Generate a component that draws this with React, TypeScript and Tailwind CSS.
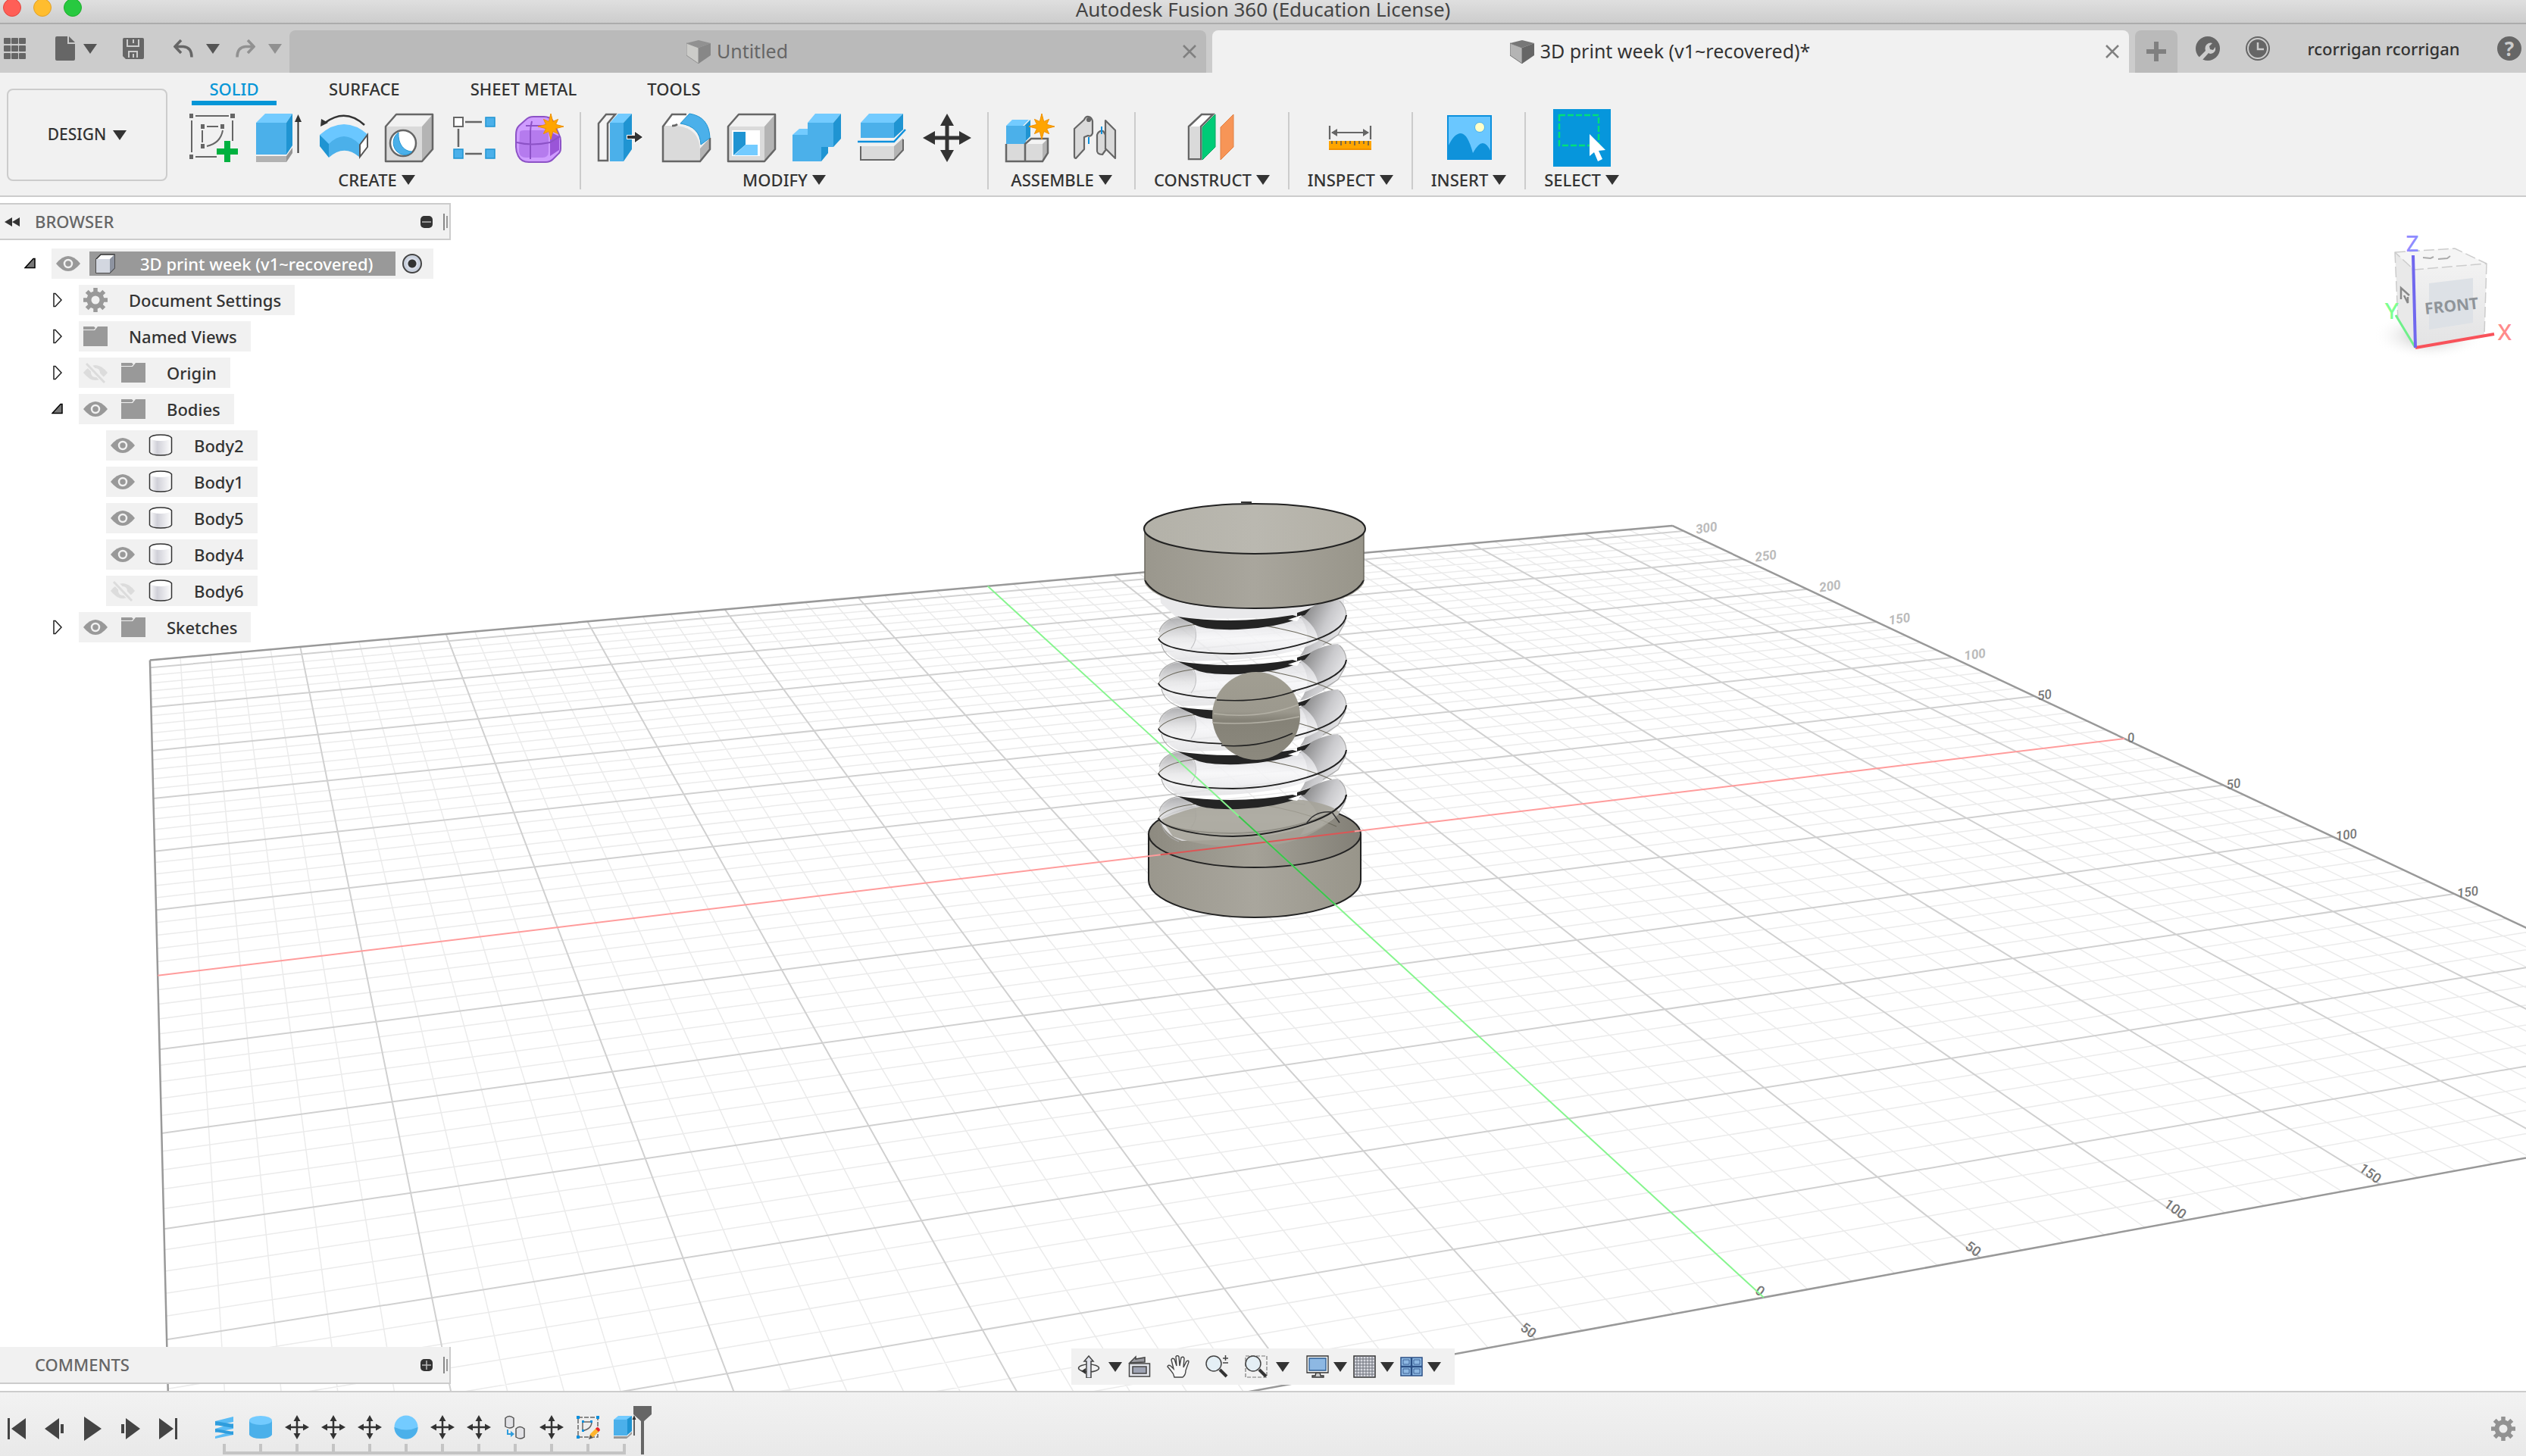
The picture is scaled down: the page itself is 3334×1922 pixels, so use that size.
import { ReactNode } from 'react';
import clsx from 'clsx';

/* ---------- small shared shapes ---------- */

const Caret = ({ className = 'text-[#333]' }: { className?: string }) => (
  <svg viewBox="0 0 18 13" className={clsx('w-[18px] h-[13px] shrink-0', className)} fill="currentColor">
    <path d="M0 0h18L9 13z" />
  </svg>
);

const starPoints = (cx: number, cy: number, outer: number, inner: number) =>
  Array.from({ length: 16 }, (_, i) => {
    const long = i % 4 === 0 ? outer : outer * 0.8;
    const r = i % 2 === 0 ? long : inner;
    const a = (Math.PI * i) / 8;
    return `${(cx + r * Math.sin(a)).toFixed(1)},${(cy - r * Math.cos(a)).toFixed(1)}`;
  }).join(' ');

const Star = ({ x, y }: { x: number; y: number }) => (
  <polygon points={starPoints(x, y, 17, 7)} fill="#ffa500" stroke="#f09000" strokeWidth="1" />
);

const Gear = ({ className }: { className: string }) => (
  <svg viewBox="0 0 32 32" className={className} fill="none" stroke="currentColor">
    <circle cx="16" cy="16" r="8.5" strokeWidth="6" />
    {[0, 45, 90, 135, 180, 225, 270, 315].map((a) => (
      <path key={a} d="M16 6V0" strokeWidth="5.5" transform={`rotate(${a} 16 16)`} />
    ))}
  </svg>
);

const MovePath = () => (
  <path
    fill="#333"
    d="M32 0l9 16h-6.5v13.5H48V23l16 9-16 9v-6.500H34.500V48H41l-9 16-9-16h6.500V34.500H16V41L0 32l16-9v6.500h13.500V16H23z"
  />
);

const GrayBox = () => (
  <g stroke="#666" strokeWidth="2.500" strokeLinejoin="round">
    <path d="M1 17L15 1h48L49 17z" fill="#f2f2f2" stroke="none" />
    <path d="M49 17L63 1v46L49 63z" fill="#b4b4b4" stroke="none" />
    <path d="M1 17h48v46H1z" fill="#dadada" stroke="none" />
    <path d="M1 17L15 1h48v46L49 63H1z" fill="none" />
  </g>
);

/* ---------- toolbar icons, all on a 64 grid ---------- */

const icons: Record<string, ReactNode> = {
  sketch: (
    <>
      <g fill="#666">
        <path d="M0 0h5v6H0zM54 0h6v6h-6zM0 54h5v6H0zM15 14h5v6h-5zM41 14h5v6h-5zM15 40h5v6h-5z" />
      </g>
      <path d="M8 3h44M3 9v42M57 9v27M8 57h28M23 17h15M17 22v16M44 22q-3 17-21 21" fill="none" stroke="#666" strokeWidth="2" />
      <path d="M46 36h8v10h10v8H54v10h-8V54H36v-8h10z" fill="#00b140" />
    </>
  ),
  extrude: (
    <>
      <path d="M2 12L14 0h36l-8 12z" fill="#73cbff" />
      <path d="M42 12l8-12v42l-8 12z" fill="#1f94d2" />
      <path d="M2 12h40v42H2z" fill="#4bb0ea" />
      <path d="M2 56h40v8H2z" fill="#b2b2b2" />
      <path d="M42 56l8-11v7l-8 12z" fill="#949494" />
      <path d="M57.500 8v44" stroke="#333" strokeWidth="2" />
      <path d="M57.500 1l4.500 10h-9z" fill="#333" />
    </>
  ),
  revolve: (
    <>
      <path d="M59 15Q34-8 7 12" fill="none" stroke="#333" strokeWidth="2.500" />
      <path d="M1 17L2 7l9 5z" fill="#333" />
      <path d="M0 28Q32 0 64 28L52 42Q32 22 12 42z" fill="#6ac7ff" />
      <path d="M0 28l12 12v18L0 43z" fill="#1f94d2" />
      <path d="M12 40q20-20 40 0v17q-20-17-40 1z" fill="#4bb0ea" />
      <path d="M53 41l10-13v16L53 57z" fill="#fff" stroke="#555" strokeWidth="2" />
    </>
  ),
  hole: (
    <>
      <GrayBox />
      <circle cx="24" cy="39" r="17" fill="#fff" stroke="#666" strokeWidth="2.500" />
      <path d="M18 25c-8 5-9 17-3 24s16 7 21 1c-10 0-19-9-18-25z" fill="#4bb0ea" stroke="#1f94d2" />
    </>
  ),
  pattern: (
    <>
      <path d="M20 11h22M11 20v24M20 53h22" stroke="#666" strokeWidth="2.500" />
      <path d="M5 5h12v12H5z" fill="#fff" stroke="#666" strokeWidth="2" />
      <path d="M47 5h12v12H47zM5 47h12v12H5zM47 47h12v12H47z" fill="#4bb0ea" stroke="#1f94d2" strokeWidth="1.500" />
    </>
  ),
  form: (
    <>
      <path d="M14 8q4-4 10-4h14q8 0 12 6l8 18q2 3 2 8v10q0 5-4 8l-6 6q-4 4-10 4H18q-10 0-14-8Q1 50 1 44V28q0-8 4-12z" fill="#cf9cff" stroke="#8c52c6" strokeWidth="2" />
      <path d="M46 24l12 6v18L46 56z" fill="#9a55d8" />
      <path d="M6 24q1-2 6-2h26q6 0 6 6v22q0 8-8 8H14q-8 0-9-8z" fill="#b57bee" />
      <path d="M22 10q-2 8-2 14v36M2 38q20 5 44 0l13-8M14 16h24" fill="none" stroke="#8c52c6" strokeWidth="2" />
      <Star x={47} y={17} />
    </>
  ),
  press: (
    <>
      <path d="M2 13L12 1h12L14 13v49H2z" fill="#f4f4f4" stroke="#666" strokeWidth="2.500" />
      <path d="M17 12L28 0h18L35 12z" fill="#73cbff" />
      <path d="M35 12L46 0v47L35 63z" fill="#1f94d2" />
      <path d="M17 12h18v51H17z" fill="#4bb0ea" />
      <path d="M40 29h10v-5l10 7-10 7v-5H40z" fill="#333" stroke="#fff" strokeWidth="2" paintOrder="stroke" />
    </>
  ),
  fillet: (
    <>
      <path d="M1 16L13 1h20L20 16z" fill="#fff" />
      <path d="M1 16h18q30 3 31 32v15H1z" fill="#dadada" />
      <path d="M50 46l13-14v14L50 63z" fill="#b4b4b4" />
      <path d="M20 14q-2 2-7 2M32 1H13L1 17v46h49l13-16V32" fill="none" stroke="#666" strokeWidth="2.500" />
      <path d="M24 13L36 0q26 4 27 32L51 41Q50 17 24 13z" fill="#4bb0ea" stroke="#1f94d2" />
    </>
  ),
  shell: (
    <>
      <GrayBox />
      <path d="M6 22h37v34H6z" fill="#fff" />
      <path d="M8 24h16v17L8 55z" fill="#1f94d2" />
      <path d="M9 55l15-14h16v14z" fill="#73cbff" />
    </>
  ),
  combine: (
    <>
      <path d="M0 28l9-8h11v8zM20 12L30 0h34L54 12z" fill="#73cbff" />
      <path d="M54 12L64 0v33L54 44zM38 44h9v8l-9 11z" fill="#1f94d2" />
      <path d="M0 28h20V12h34v32H38v19H0z" fill="#4bb0ea" />
    </>
  ),
  split: (
    <>
      <path d="M4 12L15 0h45L48 12z" fill="#73cbff" />
      <path d="M48 12L60 0v21L48 32z" fill="#1f94d2" />
      <path d="M4 12h44v20H4z" fill="#4bb0ea" />
      <path d="M0 37h48l15-16" fill="none" stroke="#0c90dd" strokeWidth="2.500" />
      <path d="M4 43h44v18H4z" fill="#dadada" />
      <path d="M48 43l12-11v16L48 61z" fill="#b4b4b4" />
      <path d="M4 43v18h44l12-13V34" fill="none" stroke="#666" strokeWidth="2" />
    </>
  ),
  move: <MovePath />,
  component: (
    <>
      <path d="M2 16l8-8h22l-8 8z" fill="#73cbff" />
      <path d="M26 16l8-8v22l-8 8z" fill="#1f94d2" />
      <path d="M2 16h26v24H2z" fill="#4bb0ea" />
      <path d="M27 40l8-7h22l-7 7z" fill="#f4f4f4" />
      <path d="M2 40h48v23H2z" fill="#dadada" />
      <path d="M50 40l7-7v19l-7 11z" fill="#b4b4b4" />
      <path d="M2 40v23h48l7-11V33H35l-8 7v23" fill="none" stroke="#666" strokeWidth="2.500" />
      <Star x={49} y={17} />
    </>
  ),
  joint: (
    <g stroke="#666" strokeWidth="2.200" strokeLinejoin="round">
      <path d="M6 20L19 8q2-5 6-4t5 6v16q-2 5-6 3l-5 2v16L8 59q-2 0-2-3z" fill="#dadada" />
      <path d="M47 9l13 13v37L48 47l-5 7q-8 0-7-7V28q2-6 8-5l3 5z" fill="#dadada" />
      <path d="M47 28v19" fill="none" />
      <circle cx="25" cy="8" r="2" fill="#666" />
      <path d="M25 31v9M42 17v10" stroke="#0c90dd" strokeWidth="2" />
    </g>
  ),
  plane: (
    <>
      <path d="M2 17L19 1h15L18 17v43H2z" fill="#fff" stroke="#666" strokeWidth="2.500" />
      <path d="M3 17h14v42H3z" fill="#dadada" />
      <path d="M20 18L37 1v43L20 61z" fill="#00cc77" stroke="#00a862" />
      <path d="M44 18L61 1v43L44 61z" fill="#f79557" stroke="#e08045" />
    </>
  ),
  measure: (
    <>
      <path d="M5 16v18M59 16v18M8 25h48" stroke="#666" strokeWidth="2.200" />
      <path d="M7 25l8-5v10zM57 25l-8-5v10z" fill="#666" />
      <path d="M4 36h56v12H4z" fill="#ffa500" />
      <path d="M4 46h56v2H4z" fill="#f09000" />
      <path d="M8 36v4M14 36v4M20 36v6M26 36v4M32 36v4M38 36v6M44 36v4M50 36v4M56 36v6" stroke="#555" strokeWidth="1.500" />
    </>
  ),
  image: (
    <>
      <path d="M4 3h57v57H4z" fill="#6ac7ff" stroke="#0c90dd" strokeWidth="2" />
      <circle cx="46" cy="18" r="6.500" fill="#ffffc8" stroke="#4bb0ea" />
      <path d="M4 44Q12 26 21 26t16 26q7-13 13-13t11 12v9H4z" fill="#0f92da" />
    </>
  ),
};

const ToolIcon = ({ name }: { name: string }) => (
  <button type="button" aria-label={name} className="w-16 h-16 shrink-0">
    <svg viewBox="0 0 64 64" className="w-16 h-16 overflow-visible">{icons[name]}</svg>
  </button>
);

const groups = [
  { label: 'CREATE', tools: ['sketch', 'extrude', 'revolve', 'hole', 'pattern', 'form'] },
  { label: 'MODIFY', tools: ['press', 'fillet', 'shell', 'combine', 'split', 'move'] },
  { label: 'ASSEMBLE', tools: ['component', 'joint'] },
  { label: 'CONSTRUCT', tools: ['plane'] },
  { label: 'INSPECT', tools: ['measure'] },
  { label: 'INSERT', tools: ['image'] },
];

const MenuLabel = ({ text }: { text: string }) => (
  <button type="button" className="flex items-center justify-center gap-[6px] h-8 text-[22px] leading-8 text-[#333] font-medium">
    {text}
    <Caret />
  </button>
);

/* ---------- window chrome ---------- */

const TitleBar = () => (
  <header className="relative h-8 shrink-0 bg-linear-to-b from-[#dfdfdf] to-[#cdcdcd] border-b-2 border-[#acacac] flex items-start justify-center">
    <div className="absolute left-1 -top-0.5 flex gap-4">
      <button type="button" aria-label="Close" className="w-6 h-6 rounded-full bg-[#ff5f57] border border-[#e2463f]" />
      <button type="button" aria-label="Minimize" className="w-6 h-6 rounded-full bg-[#ffbd2e] border border-[#e0a028]" />
      <button type="button" aria-label="Zoom" className="w-6 h-6 rounded-full bg-[#28c940] border border-[#1dad2b]" />
    </div>
    <h1 className="text-[26px] leading-6 text-[#444]">Autodesk Fusion 360 (Education License)</h1>
  </header>
);

const DocTab = ({ title, active }: { title: string; active?: boolean }) => (
  <div
    className={clsx(
      'flex-1 flex items-center rounded-t-lg h-14 pl-2 pr-2 text-[25px]',
      active ? 'bg-[#f1f1f1] text-[#333]' : 'bg-[#bababa] text-[#666]'
    )}
  >
    <button type="button" className="flex-1 flex items-center justify-center gap-2">
      <svg viewBox="0 0 32 31" className={clsx('w-8 h-[31px]', !active && 'opacity-60')}>
        <path d="M0 4L16 0l16 4-16 6z" fill="#777" />
        <path d="M0 4l16 6v21L0 20z" fill={active ? '#b4b4b4' : '#d8d8d4'} stroke="#777" />
        <path d="M16 10l16-6v16L16 31z" fill="#666" />
      </svg>
      <span>{title}</span>
    </button>
    <button type="button" aria-label={`Close ${title}`} className="w-7 h-7 flex items-center justify-center">
      <svg viewBox="0 0 18 18" className="w-[18px] h-[18px]" stroke="#808080" strokeWidth="2.500">
        <path d="M1 1l16 16M17 1L1 17" />
      </svg>
    </button>
  </div>
);

const TabBar = () => (
  <div className="h-16 shrink-0 bg-[#ccc] flex items-end">
    <div className="w-[382px] h-16 shrink-0 flex items-center pl-[5px] text-[#666]">
      <button type="button" aria-label="Data panel" className="mr-[39px]">
        <svg viewBox="0 0 29 28" className="w-[29px] h-7" fill="currentColor">
          {[0, 10, 20].map((x) => [0, 10, 20].map((y) => <rect key={`${x}-${y}`} x={x} y={y} width="9" height="8" rx="1" />))}
        </svg>
      </button>
      <button type="button" aria-label="File" className="flex items-center gap-[11px] mr-[34px]">
        <svg viewBox="0 0 26 32" className="w-[26px] h-8" fill="currentColor">
          <path d="M2 0h14v10h10v20q0 2-2 2H2q-2 0-2-2V2q0-2 2-2z" />
          <path d="M18 0l8 8h-8z" />
        </svg>
        <Caret className="text-[#555]" />
      </button>
      <button type="button" aria-label="Save" className="mr-[39px]">
        <svg viewBox="0 0 28 28" className="w-7 h-7">
          <path d="M2 0h24q2 0 2 2v24q0 2-2 2H4l-4-4V2q0-2 2-2z" fill="#666" />
          <path d="M6 2v9h15V2M8 26v-8h11v8M14 2v5M14 21v5" fill="none" stroke="#ccc" strokeWidth="2" />
        </svg>
      </button>
      <button type="button" aria-label="Undo" className="flex items-center gap-[17px] mr-[21px]">
        <svg viewBox="0 0 26 24" className="w-[26px] h-6" fill="none" stroke="currentColor" strokeWidth="3.500">
          <path d="M10 1L2 9.500l8 8.500M3 9.500h10q11 1 11 14" />
        </svg>
        <Caret className="text-[#555]" />
      </button>
      <button type="button" aria-label="Redo" className="flex items-center gap-[17px] text-[#919191]">
        <svg viewBox="0 0 26 24" className="w-[26px] h-6" fill="none" stroke="currentColor" strokeWidth="3.500">
          <path d="M16 1l8 8.500-8 8.500M23 9.500H13Q2 10.500 2 23.500" />
        </svg>
        <Caret className="text-[#919191]" />
      </button>
    </div>
    <div className="flex-1 flex gap-2">
      <DocTab title="Untitled" />
      <DocTab title="3D print week (v1~recovered)*" active />
      <button type="button" aria-label="New tab" className="w-14 h-14 rounded-t-lg bg-[#bababa] flex items-center justify-center">
        <svg viewBox="0 0 26 26" className="w-[26px] h-[26px]" stroke="#808080" strokeWidth="6">
          <path d="M13 0v26M0 13h26" />
        </svg>
      </button>
    </div>
    <div className="w-[460px] h-16 shrink-0 flex items-center pl-6 pr-[6px] text-[#666]">
      <button type="button" aria-label="Extensions">
        <svg viewBox="0 0 32 32" className="w-8 h-8">
          <circle cx="16" cy="16" r="16" fill="currentColor" />
          <path d="M4 28l9-9q-2-7 4-10 3-1 5 0l-4 4 1 4 4 1 3-4q1 8-6 9-2 0-3-1l-8 9z" fill="#ccc" />
        </svg>
      </button>
      <button type="button" aria-label="Job status" className="ml-[34px]">
        <svg viewBox="0 0 32 32" className="w-8 h-8">
          <circle cx="16" cy="16" r="15" fill="none" stroke="currentColor" strokeWidth="2" />
          <circle cx="16" cy="16" r="12" fill="currentColor" />
          <path d="M16 8v9h8" fill="none" stroke="#ccc" strokeWidth="2.500" />
        </svg>
      </button>
      <button type="button" className="flex-1 text-[22px] leading-7 text-[#333] font-medium">rcorrigan rcorrigan</button>
      <button type="button" aria-label="Help" className="w-8 h-8 rounded-full bg-[#666] text-[#ccc] text-[26px] leading-8 font-bold">
        ?
      </button>
    </div>
  </div>
);

const Toolbar = () => (
  <div className="h-[164px] shrink-0 bg-[#f1f1f1] border-b-2 border-[#ccc] flex items-start">
    <button
      type="button"
      className="mt-[21px] ml-[9px] w-[212px] h-[122px] shrink-0 rounded-lg border-2 border-[#ccc] flex items-center justify-center gap-[9px] text-[21px] text-[#333] font-medium"
    >
      DESIGN
      <Caret />
    </button>
    <div className="flex-1">
      <nav className="flex pl-8 gap-[45px] h-[43px] text-[22px] leading-8 text-[#333] font-medium">
        <button type="button" className="w-28 pt-[5px] text-center text-[#0696d7] border-b-6 border-[#0696d7]">SOLID</button>
        <button type="button" className="px-6 pt-[5px] border-b-6 border-transparent">SURFACE</button>
        <button type="button" className="px-6 pt-[5px] border-b-6 border-transparent">SHEET METAL</button>
        <button type="button" className="px-6 pt-[5px] border-b-6 border-transparent">TOOLS</button>
      </nav>
      <div className="flex mt-[5px] pl-2">
        {groups.map((g) => (
          <div key={g.label} className="flex items-center">
            <div className={clsx('flex flex-col items-center', g.tools.length > 1 ? 'px-[21px]' : 'px-6')}>
              <div className="h-[76px] flex items-center gap-[22px]">
                {g.tools.map((t) => (
                  <ToolIcon key={t} name={t} />
                ))}
              </div>
              <div className="mt-[1px]">
                <MenuLabel text={g.label} />
              </div>
            </div>
            <div className="w-[2px] h-[102px] bg-[#ccc]" />
          </div>
        ))}
        <div className="flex flex-col items-center px-6">
          <button type="button" aria-label="Select" className="w-[76px] h-[76px] bg-[#0696dc]">
            <svg viewBox="0 0 76 76" className="w-[76px] h-[76px]">
              <rect x="8" y="8" width="52" height="40" fill="none" stroke="#00e07a" strokeWidth="2.500" strokeDasharray="8 3" />
              <path d="M48 33v29l6-5 5 12 6-3-5-11 9-1z" fill="#fff" />
            </svg>
          </button>
          <div className="mt-[1px]">
            <MenuLabel text="SELECT" />
          </div>
        </div>
      </div>
    </div>
  </div>
);

/* ---------- browser tree ---------- */

const Eye = ({ off }: { off?: boolean }) => (
  <button type="button" aria-label={off ? 'Show' : 'Hide'} className="w-8 h-8 shrink-0">
    {off ? (
      <svg viewBox="0 0 32 32" className="w-8 h-8">
        <path d="M0 16Q16-4 32 16 16 36 0 16z" fill="#dcdcdc" />
        <circle cx="16" cy="16" r="6" fill="#f1f1f1" />
        <path d="M2 1l28 29" stroke="#f1f1f1" strokeWidth="7" />
        <path d="M4 4l24 25" stroke="#dcdcdc" strokeWidth="3" />
      </svg>
    ) : (
      <svg viewBox="0 0 32 32" className="w-8 h-8">
        <path d="M0 16Q16-4 32 16 16 36 0 16z" fill="#999" />
        <circle cx="16" cy="16" r="5" fill="#999" stroke="#f1f1f1" strokeWidth="2.500" />
      </svg>
    )}
  </button>
);

const Folder = () => (
  <svg viewBox="0 0 32 32" className="w-8 h-8 shrink-0" fill="#999">
    <path d="M0 3h14l2 2-2 2H0zM0 8h15l4-5h13v26H0z" />
  </svg>
);

const BodyIcon = () => (
  <svg viewBox="0 0 32 32" className="w-8 h-8 shrink-0">
    <defs>
      <linearGradient id="cyl" x1="0" x2="1">
        <stop offset="0" stopColor="#fff" />
        <stop offset=".35" stopColor="#d0d0d8" />
        <stop offset="1" stopColor="#fff" />
      </linearGradient>
    </defs>
    <path d="M1 6v19q2 4 15 4t15-4V6z" fill="url(#cyl)" />
    <ellipse cx="16" cy="6" rx="14.500" ry="4" fill="#fff" />
    <path d="M1.500 6v19q2 4 14.500 4t14.500-4V6Q28 2 16 2T1.500 6z" fill="none" stroke="#333" strokeWidth="1.500" />
  </svg>
);

const Expander = ({ open }: { open?: boolean }) => (
  <button type="button" aria-label={open ? 'Collapse' : 'Expand'} className="w-4 h-5 shrink-0">
    {open ? (
      <svg viewBox="0 0 16 20" className="w-4 h-5">
        <path d="M1 15.500L12 3.500h2v12z" fill="#777" stroke="#000" strokeWidth="1.500" />
      </svg>
    ) : (
      <svg viewBox="0 0 16 20" className="w-4 h-5">
        <path d="M3 1.500h2l8 8.500-8 8.500H3z" fill="#fff" stroke="#222" strokeWidth="1.500" />
      </svg>
    )}
  </button>
);

interface Node {
  label: string;
  icon: 'gear' | 'folder' | 'body';
  eye?: 'on' | 'off';
  open?: boolean;
}

const nodes: Node[] = [
  { label: 'Document Settings', icon: 'gear' },
  { label: 'Named Views', icon: 'folder' },
  { label: 'Origin', icon: 'folder', eye: 'off' },
  { label: 'Bodies', icon: 'folder', eye: 'on', open: true },
  { label: 'Body2', icon: 'body', eye: 'on' },
  { label: 'Body1', icon: 'body', eye: 'on' },
  { label: 'Body5', icon: 'body', eye: 'on' },
  { label: 'Body4', icon: 'body', eye: 'on' },
  { label: 'Body6', icon: 'body', eye: 'off' },
  { label: 'Sketches', icon: 'folder', eye: 'on' },
];

const PanelHeader = ({ title, collapse }: { title: string; collapse?: boolean }) => (
  <div
    className={clsx(
      'w-[595px] h-[49px] bg-[#f1f1f1] border-r-2 border-b-2 border-[#ccc] flex items-center pl-[6px] pr-[2px]',
      collapse && 'border-t-2'
    )}
  >
    <div className="w-10 shrink-0">
      {collapse && (
        <svg viewBox="0 0 20 12" className="w-5 h-3" fill="#333">
          <path d="M10 0v12L0 6zM20 0v12L10 6z" />
        </svg>
      )}
    </div>
    <h2 className="flex-1 pb-[2px] text-[22px] leading-7 text-[#666] font-medium">{title}</h2>
    <button type="button" aria-label={collapse ? 'Minimize browser' : 'Expand comments'} className="mr-[14px]">
      <svg viewBox="0 0 16 16" className="w-4 h-4">
        <rect width="16" height="16" rx="5" fill="#333" />
        <path d={collapse ? 'M2 8h12' : 'M2 8h12M8 2v12'} stroke="#bbb" strokeWidth="1.500" />
      </svg>
    </button>
    <div className="flex gap-[2px]">
      <div className="w-[2px] h-[22px] bg-[#888]" />
      <div className="w-[2px] h-4 my-auto bg-[#999]" />
    </div>
  </div>
);

const Browser = () => (
  <section className="absolute left-0 top-2">
    <PanelHeader title="BROWSER" collapse />
    <ul className="mt-[11px] flex flex-col gap-2 text-[22px] leading-8 text-[#333] font-medium">
      <li className="flex items-center h-10 pl-8">
        <Expander open />
        <div className="ml-5 h-10 flex items-center bg-[#f1f1f1] pl-[6px] pr-[15px]">
          <Eye />
          <div className="ml-3 h-8 flex items-center bg-[#999] text-white pl-2 pr-[30px]">
            <svg viewBox="0 0 26 26" className="w-[26px] h-[26px]">
              <path d="M1 7l6-6h18v18l-6 6H1z" fill="#fff" stroke="#333" strokeWidth="1.500" />
              <path d="M19 7l6-6v18l-6 6z" fill="#8d93a0" />
              <path d="M1 7h18v18H1z" fill="#d3d7e0" />
            </svg>
            <span className="ml-[33px]">3D print week (v1~recovered)</span>
          </div>
          <input
            type="radio"
            aria-label="Activate 3D print week (v1~recovered)"
            defaultChecked
            className="appearance-none ml-[9px] w-[26px] h-[26px] rounded-full border-2 border-[#444] bg-[radial-gradient(circle,#333_0_5px,#dfe4ee_6px,#c5cddb_60%,#fff)]"
          />
        </div>
      </li>
      {nodes.map((n) => (
        <li key={n.label} className={clsx('flex items-center h-10', n.icon === 'body' ? 'pl-[140px]' : 'pl-[68px]')}>
          {n.icon !== 'body' && (
            <div className="w-9 flex">
              <Expander open={n.open} />
            </div>
          )}
          <div className="h-10 flex items-center bg-[#f1f1f1] pl-[6px] pr-[18px]">
            {n.eye && (
              <div className="mr-[18px] flex">
                <Eye off={n.eye === 'off'} />
              </div>
            )}
            {n.icon === 'gear' && <Gear className="w-8 h-8 text-[#999]" />}
            {n.icon === 'folder' && <Folder />}
            {n.icon === 'body' && <BodyIcon />}
            <span className="ml-7">{n.label}</span>
          </div>
        </li>
      ))}
    </ul>
  </section>
);

/* ---------- 3D scene ---------- */

// Ground plane (mm) to screen
const project = (x: number, y: number) => {
  const w = 1 + 0.0003758 * x + 0.001048 * y;
  return [(4.9575 * x + 0.178 * y + 1672) / w, (-0.104 * x - 0.2785 * y + 1111.4) / w];
};

const seg = (x1: number, y1: number, x2: number, y2: number) => {
  const [a, b] = project(x1, y1);
  const [c, d] = project(x2, y2);
  return `M${a.toFixed(1)} ${b.toFixed(1)}L${c.toFixed(1)} ${d.toFixed(1)}`;
};

const X0 = -300;
const X1 = 290;
const Y0 = -290;
const Y1 = 310;

const range = (from: number, to: number, step: number) =>
  Array.from({ length: Math.floor((to - from) / step) + 1 }, (_, i) => from + i * step);

const minor = [
  ...range(X0, X1, 10).filter((x) => x % 50).map((x) => seg(x, Y0, x, Y1)),
  ...range(Y0, Y1, 10).filter((y) => y % 50).map((y) => seg(X0, y, X1, y)),
].join('');

const major = [
  ...range(-250, 250, 50).filter((x) => x).map((x) => seg(x, Y0, x, Y1)),
  ...range(-250, 300, 50).filter((y) => y).map((y) => seg(X0, y, X1, y)),
].join('');

const border = seg(X0, Y0, X0, Y1) + seg(X0, Y1, X1, Y1) + seg(X1, Y1, X1, Y0) + seg(X1, Y0, X0, Y0);

const coilOffsets = [0, 59, 119, 178, 237];

const Coil = ({ dy }: { dy: number }) => (
  <g transform={`translate(0 ${dy})`}>
    <path d="M1714 812Q1742 792 1766 791Q1778 800 1777 818Q1772 836 1754 848Q1736 860 1716 866Q1736 838 1714 812z" fill="url(#coilR)" />
    <path d="M1529 843Q1532 822 1556 814Q1640 834 1716 812Q1738 826 1740 846Q1700 872 1560 873Q1538 866 1529 843z" fill="url(#coilF)" />
    <ellipse cx="1554" cy="838" rx="24" ry="22" fill="url(#coilL)" />
    <path d="M1533 850Q1536 866 1556 874M1530 834Q1534 818 1556 814M1768 793Q1776 800 1777 812M1776 820L1766 838L1746 851" fill="none" stroke="#aaa" strokeWidth="1.200" />
    <path d="M1574 822Q1584 840 1572 856" fill="none" stroke="#c4c4c6" strokeWidth="1.200" />
    <path d="M1529 843Q1540 828 1580 824Q1650 820 1690 830Q1730 838 1764 854" fill="none" stroke="#6b685c" strokeWidth="1.200" />
    <path d="M1529 843C1535 858 1590 863 1627 863C1690 862 1774 842 1777 812" fill="none" stroke="#222" strokeWidth="2" />
  </g>
);

const CoilShadow = ({ dy }: { dy: number }) => (
  <g transform={`translate(0 ${dy})`}>
    <path d="M1554 814Q1630 825 1706 812L1717 815Q1690 828 1634 831Q1596 832 1580 826Z" fill="#242424" />
    <path d="M1712 809L1730 803L1722 812L1712 814z" fill="#242424" />
    <path d="M1700 818l18-6-6 8z" fill="#fff" />
  </g>
);

const rightLabels = [300, 250, 200, 150, 100, 50, 0, -50, -100, -150];
const bottomLabels = [-50, 0, 50, 100, 150];

const Scene = () => (
  <svg viewBox="0 260 3334 1576" preserveAspectRatio="xMidYMid slice" className="absolute inset-0 w-full h-full" fontFamily="Roboto, sans-serif">
    <defs>
      <linearGradient id="side" x1="0" x2="1">
        <stop offset="0" stopColor="#9a978d" />
        <stop offset=".5" stopColor="#a9a69d" />
        <stop offset="1" stopColor="#98958a" />
      </linearGradient>
      <linearGradient id="topFace" x1="0" x2="1">
        <stop offset="0" stopColor="#b3b1a8" />
        <stop offset=".5" stopColor="#bab8b0" />
        <stop offset="1" stopColor="#b2afa5" />
      </linearGradient>
      <linearGradient id="baseTop" x1="0" x2="1">
        <stop offset="0" stopColor="#8d8a80" />
        <stop offset=".5" stopColor="#a5a298" />
        <stop offset="1" stopColor="#827f76" />
      </linearGradient>
      <linearGradient id="coilF" x1="0" x2="0" y1="0" y2="1">
        <stop offset="0" stopColor="#d6d6da" stopOpacity=".85" />
        <stop offset=".5" stopColor="#f6f6f8" stopOpacity=".85" />
        <stop offset="1" stopColor="#e2e2e4" stopOpacity=".85" />
      </linearGradient>
      <linearGradient id="coilR" x1="0" x2="1" y1="0" y2=".6">
        <stop offset="0" stopColor="#6c6c6c" />
        <stop offset=".6" stopColor="#c9c9cc" />
        <stop offset="1" stopColor="#f0f0f2" />
      </linearGradient>
      <linearGradient id="coilL" x1="0" x2="0" y1="0" y2="1">
        <stop offset="0" stopColor="#9c9c9e" stopOpacity=".7" />
        <stop offset="1" stopColor="#fff" stopOpacity=".3" />
      </linearGradient>
      <linearGradient id="ball" x1="0" x2="0" y1="0" y2="1">
        <stop offset="0" stopColor="#a19e92" />
        <stop offset=".45" stopColor="#9c998e" />
        <stop offset=".55" stopColor="#858277" />
        <stop offset="1" stopColor="#8c897e" />
      </linearGradient>
    </defs>

    <path d={minor} stroke="#ebebeb" strokeWidth="1.500" />
    <path d={major} stroke="#d0d0d0" strokeWidth="2" />
    <path d={border} stroke="#999" strokeWidth="2.500" />

    {rightLabels.map((v) => {
      const [x, y] = project(X1, v);
      const far = v >= 100;
      return (
        <text
          key={v}
          x={x + (far ? 16 : 4)}
          y={y + 6}
          fontSize="17"
          fontStyle="italic"
          fontWeight={far ? 700 : 500}
          fill={far ? '#bbb' : '#777'}
          transform={`rotate(-8 ${x} ${y})`}
        >
          {Math.abs(v)}
        </text>
      );
    })}
    {bottomLabels.map((v) => {
      const [x, y] = project(v, Y0);
      return (
        <text key={v} x={x - 4} y={y + 2} fontSize="18" fontWeight="500" textAnchor="end" fill="#777" transform={`rotate(36 ${x} ${y})`}>
          {Math.abs(v)}
        </text>
      );
    })}

    {/* base */}
    <path d="M1516 1101v61a140 49 0 0 0 280 0v-61z" fill="url(#side)" />
    <path d="M1516 1101v61a140 49 0 0 0 280 0v-61" fill="none" stroke="#222" strokeWidth="2" />
    <ellipse cx="1656" cy="1101" rx="140" ry="44" fill="url(#baseTop)" stroke="#222" strokeWidth="2" />

    {/* spring */}
    <path d="M1530 770h244v30q-40 20-220 16l-22-20z" fill="#e9e9eb" />
    {coilOffsets.map((dy) => (
      <Coil key={dy} dy={dy} />
    ))}
    <path d="M1533 1082Q1600 1050 1720 1056Q1758 1062 1768 1072Q1740 1104 1690 1114Q1600 1124 1548 1104Z" fill="#a5a298" opacity=".85" />
    {coilOffsets.map((dy) => (
      <CoilShadow key={dy} dy={dy} />
    ))}
    <path d="M1529 1080C1535 1095 1590 1104 1627 1104C1690 1103 1774 1079 1777 1049" fill="none" stroke="#222" strokeWidth="2" />
    <path d="M1724 1088q10-18 34-16l10 14" fill="none" stroke="#333" strokeWidth="1.500" />

    {/* ball */}
    <ellipse cx="1658" cy="945" rx="58" ry="58" fill="url(#ball)" />
    <path d="M1602 942q60 8 112-12M1600 954q60 4 115-8" fill="none" stroke="#b3b0a5" strokeWidth="1.500" />
    <path d="M1606 924q60 4 104-12M1612 984q50 4 94-16" fill="none" stroke="#222" strokeWidth="1.500" />

    {/* cap */}
    <path d="M1511 698v72q20 33 145 33t144-33v-72z" fill="url(#side)" />
    <path d="M1511 766q20 37 145 37t144-37" fill="none" stroke="#222" strokeWidth="2" />
    <path d="M1511 698v68M1800 698v68" stroke="#6b685f" strokeWidth="1.500" />
    <ellipse cx="1656" cy="698" rx="146" ry="33" fill="url(#topFace)" stroke="#222" strokeWidth="2" />
    <path d="M1638 663h14" stroke="#333" strokeWidth="2" />

    <path d={seg(X0, 0, -32, 0) + seg(27, 0, X1, 0)} stroke="#ff9c9c" strokeWidth="2" />
    <path d={seg(-32, 0, 27, 0)} stroke="#d55" strokeWidth="2" />
    <path d={seg(0, Y0, 0, Y1)} stroke="#86f58e" strokeWidth="2" />
    <path d={seg(0, -54, 0, 24)} stroke="#3cc04c" strokeWidth="2" />
  </svg>
);

const ViewCube = () => (
  <svg viewBox="3098 281 234 200" className="absolute right-0 top-5 w-[234px] h-[200px]" fontFamily="Inter, sans-serif">
    <defs>
      <radialGradient id="shade">
        <stop offset="0" stopColor="#999" stopOpacity=".75" />
        <stop offset="1" stopColor="#fff" stopOpacity="0" />
      </radialGradient>
      <linearGradient id="face" x1="0" x2="0" y1="0" y2="1">
        <stop offset="0" stopColor="#f2f2f2" />
        <stop offset="1" stopColor="#e3e3e4" />
      </linearGradient>
    </defs>
    <ellipse cx="3204" cy="444" rx="74" ry="32" fill="url(#shade)" />
    <g strokeLinejoin="round">
      <path d="M3159 334L3238 329L3280 349L3184 357z" fill="#f5f5f5" />
      <path d="M3159 334L3184 357L3186 460L3163 423z" fill="#e9e9e9" />
      <path d="M3184 357L3280 349L3277 443L3186 460z" fill="url(#face)" />
      <path d="M3159 334L3238 329L3280 349L3184 357zM3159 334L3163 423M3280 349L3277 443" fill="none" stroke="#ccc" strokeWidth="1.500" strokeDasharray="14 5" />
    </g>
    <path d="M3204 375l58-7v59l-58 9z" fill="#dde1e6" />
    <text x="3199" y="416" fontSize="21" fontWeight="700" fontFamily="Open Sans, sans-serif" fill="#8f9499" transform="rotate(-6 3199 416)">FRONT</text>
    <path d="M3167 396v-15l11 10M3171 391l5 10v-8" fill="none" stroke="#888" strokeWidth="2.500" />
    <path d="M3196 341l10 1 4-2M3216 343l12-1 4-3" fill="none" stroke="#aaa" strokeWidth="2" />
    <path d="M3186 460L3160 417" stroke="#6ff08a" strokeWidth="3" />
    <path d="M3186 460L3290 442" stroke="#f8525a" strokeWidth="4" />
    <path d="M3186 460L3183 338" stroke="#7168ee" strokeWidth="4" />
    <text x="3173" y="333" fontSize="28" fontWeight="500" fill="#8f8cff">Z</text>
    <text x="3294" y="450" fontSize="28" fontWeight="500" fill="#ff8a8a">X</text>
    <text x="3145" y="422" fontSize="28" fontWeight="500" fill="#7dff8f">Y</text>
  </svg>
);

/* ---------- navigation bar ---------- */

const navIcons: Record<string, ReactNode> = {
  orbit: (
    <g stroke="#444" strokeWidth="1.500" fill="#dfe1ea">
      <ellipse cx="15" cy="17" rx="13.500" ry="5" fill="none" />
      <path d="M15 1l6 7h-3v22h-6V8H9z" />
      <path d="M5 21l6-4v8z" fill="#333" stroke="none" />
    </g>
  ),
  look: (
    <g stroke="#444" strokeWidth="1.500">
      <path d="M2 10l8-8v3l12-2v6z" fill="#9a9aa0" />
      <path d="M1.500 11h27v17h-27z" fill="#e4e6ec" />
      <path d="M6 15h18v9H6z" fill="#9ea3b3" />
    </g>
  ),
  pan: (
    <path
      d="M10 29q-1-5-4-8l-5-6q1-3 4-1l4 4L6 6q1-3 4-1l3 9-1-12q2-3 4 0l1 12 2-11q3-2 4 1l-1 12 4-8q3-2 3 1l-4 11q0 6-4 9z"
      fill="#f8f8f8"
      stroke="#444"
      strokeWidth="1.400"
    />
  ),
  zoom: (
    <g>
      <path d="M19 19l9 9" stroke="#333" strokeWidth="4" />
      <circle cx="11" cy="11" r="10" fill="#e4eff5" stroke="#444" strokeWidth="1.500" />
      <path d="M23 4h7M26.500 0v7M23 10h7" stroke="#444" strokeWidth="1.500" />
    </g>
  ),
  fit: (
    <g>
      <rect x="1" y="1" width="28" height="28" fill="none" stroke="#777" strokeWidth="1.200" strokeDasharray="5 2" />
      <path d="M19 19l9 9" stroke="#333" strokeWidth="4" />
      <circle cx="11" cy="11" r="10" fill="#e4eff5" stroke="#444" strokeWidth="1.500" />
    </g>
  ),
  display: (
    <g stroke="#333" strokeWidth="1.300">
      <path d="M13 23h5l1 4h4v2H8v-2h4z" fill="#ccc" />
      <path d="M1 1h28v22H1z" fill="#f4f4f0" />
      <path d="M4 4h22v16H4z" fill="#8db8e3" stroke="#2b5c95" />
    </g>
  ),
  grid: (
    <g>
      <path d="M1 1h28v28H1z" fill="#d8d9e0" stroke="#333" strokeWidth="1.500" />
      <path d="M5 1v28M9 1v28M13 1v28M17 1v28M21 1v28M25 1v28M1 5h28M1 9h28M1 13h28M1 17h28M1 21h28M1 25h28" stroke="#6c707b" strokeWidth="1" />
    </g>
  ),
  views: (
    <g stroke="#2b4f85" strokeWidth="1.500" fill="#8db8e3">
      <path d="M1 3h28v24H1z" />
      <path d="M15 3v24M1 15h28" strokeWidth="2.500" />
      <path d="M4 6h8v6H4zM18 6h8v6h-8zM4 18h8v6H4zM18 18h8v6h-8z" strokeWidth=".800" />
    </g>
  ),
};

const NavButton = ({ name, menu, className }: { name: string; menu?: boolean; className?: string }) => (
  <button type="button" aria-label={name} className={clsx('flex items-center', className)}>
    <svg viewBox="0 0 30 30" className="w-[30px] h-[30px]">{navIcons[name]}</svg>
    {menu && <Caret className={clsx('text-[#333]', name === 'orbit' || name === 'fit' ? 'ml-[11px]' : 'ml-[6px]')} />}
  </button>
);

const NavBar = () => (
  <div className="absolute bottom-2 left-1/2 -translate-x-1/2 h-12 bg-[#f1f1f1] flex items-center pl-2 pr-[18px]">
    <NavButton name="orbit" menu />
    <NavButton name="look" className="ml-2" />
    <NavButton name="pan" className="ml-[21px]" />
    <NavButton name="zoom" className="ml-[21px]" />
    <NavButton name="fit" menu className="ml-[22px]" />
    <NavButton name="display" menu className="ml-[22px]" />
    <NavButton name="grid" menu className="ml-2" />
    <NavButton name="views" menu className="ml-2" />
  </div>
);

/* ---------- timeline ---------- */

const features: Record<string, ReactNode> = {
  coil: (
    <>
      <path d="M4 8l24-6v7L4 14zM4 18l24-7v7L4 23zM4 28l24-7v5L4 31z" fill="#5bbcf5" />
      <path d="M4 8l24 4v5L4 13zM4 18l24 4v4L4 22z" fill="#2f9ddd" />
    </>
  ),
  cylinder: (
    <>
      <path d="M1 7v19q3 5 15 5t15-5V7z" fill="#4bb0ea" />
      <ellipse cx="16" cy="7" rx="15" ry="6" fill="#73cbff" />
    </>
  ),
  move: (
    <g transform="scale(.5)">
      <MovePath />
    </g>
  ),
  sphere: (
    <>
      <circle cx="16" cy="16" r="15.500" fill="#73cbff" />
      <path d="M.5 16a15.500 15.500 0 0 0 31 0q-15 7-31 0z" fill="#4bb0ea" />
    </>
  ),
  copy: (
    <>
      <path d="M3 4q5-5 11 0v11q-5 4-11 0zM17 18q5-5 11 0v11q-5 4-11 0z" fill="#e2e2e6" stroke="#555" strokeWidth="1.500" />
      <path d="M6 19v6h5" fill="none" stroke="#2f9ddd" strokeWidth="2" />
      <path d="M10 21l5 4-5 4z" fill="#2f9ddd" />
    </>
  ),
  sketch: (
    <>
      <path d="M3 3h26v26H3z" fill="none" stroke="#666" strokeWidth="1.500" strokeDasharray="6 2" />
      <path d="M9 21V9h12q0 9-12 12" fill="none" stroke="#666" strokeWidth="1.500" />
      <path d="M1 1h4v4H1zM27 1h4v4h-4zM1 27h4v4H1zM8 7h3v3H8zM19 7h3v3h-3zM8 19h3v3H8z" fill="#0c90dd" />
      <path d="M18 31l1-6 8-8 4 4-8 8z" fill="#ffb52e" />
      <path d="M26 18l2-2q3 0 4 4l-2 2z" fill="#e8222c" />
      <path d="M17 32l2-6 4 4z" fill="#555" />
    </>
  ),
  extrude: (
    <>
      <path d="M2 6l6-5h18l-6 5z" fill="#73cbff" />
      <path d="M19 6l7-5v20l-7 6z" fill="#1f94d2" />
      <path d="M2 6h18v21H2z" fill="#4bb0ea" />
      <path d="M2 28h18l6-6v3l-7 6H2z" fill="#999" />
      <path d="M29 2v25" stroke="#333" strokeWidth="1.500" />
      <path d="M29 0l2.500 6h-5z" fill="#333" />
    </>
  ),
};

const history = ['coil', 'cylinder', 'move', 'move', 'move', 'sphere', 'move', 'move', 'copy', 'move', 'sketch', 'extrude'];

const transport = [
  { name: 'Go to start', d: 'M4 2h3v28H4zM28 2v28L9 16z' },
  { name: 'Step back', d: 'M22 2v28L3 16zM24 10h4v12h-4z' },
  { name: 'Play', d: 'M5 0l23 16L5 32z' },
  { name: 'Step forward', d: 'M10 2v28l19-14zM4 10h4v12H4z' },
  { name: 'Go to end', d: 'M25 2h3v28h-3zM4 2v28l19-14z' },
];

const Timeline = () => (
  <footer className="h-[86px] shrink-0 border-t-2 border-[#ccc] bg-linear-to-b from-[#f2f2f2] to-[#e9e9e9] flex items-start">
    <div className="flex gap-[18px] pl-[6px] pt-8">
      {transport.map((t) => (
        <button key={t.name} type="button" aria-label={t.name} className="w-8 h-8">
          <svg viewBox="0 0 32 32" className="w-8 h-8" fill="#444"><path d={t.d} /></svg>
        </button>
      ))}
    </div>
    <div className="relative ml-[34px] pt-[30px]">
      <ol className="flex">
        {history.map((h, i) => (
          <li key={i} className="w-12 flex flex-col items-center">
            <button type="button" aria-label={h} className="w-8 h-8">
              <svg viewBox="0 0 32 32" className="w-8 h-8">{features[h]}</svg>
            </button>
            <div className="mt-[6px] w-1 h-[10px] bg-[#c4c4c4]" />
          </li>
        ))}
      </ol>
      <div className="mx-[22px] h-1 bg-[#c4c4c4]" />
      <svg viewBox="0 0 24 64" className="absolute -right-3 top-[18px] w-6 h-16" fill="#666">
        <path d="M0 0h24v11l-10 9v44h-4V20L0 11z" />
      </svg>
    </div>
    <button type="button" aria-label="Timeline settings" className="ml-auto mr-[14px] mt-8 w-8 h-8">
      <Gear className="w-8 h-8 text-[#929292]" />
    </button>
  </footer>
);

const App = () => (
  <div className="h-screen flex flex-col overflow-hidden bg-white font-['Noto_Sans','Open_Sans',sans-serif]">
    <TitleBar />
    <TabBar />
    <Toolbar />
    <main className="relative flex-1 overflow-hidden bg-white">
      <Scene />
      <ViewCube />
      <Browser />
      <section className="absolute left-0 bottom-[9px]">
        <PanelHeader title="COMMENTS" />
      </section>
      <NavBar />
    </main>
    <Timeline />
  </div>
);

export default App;
